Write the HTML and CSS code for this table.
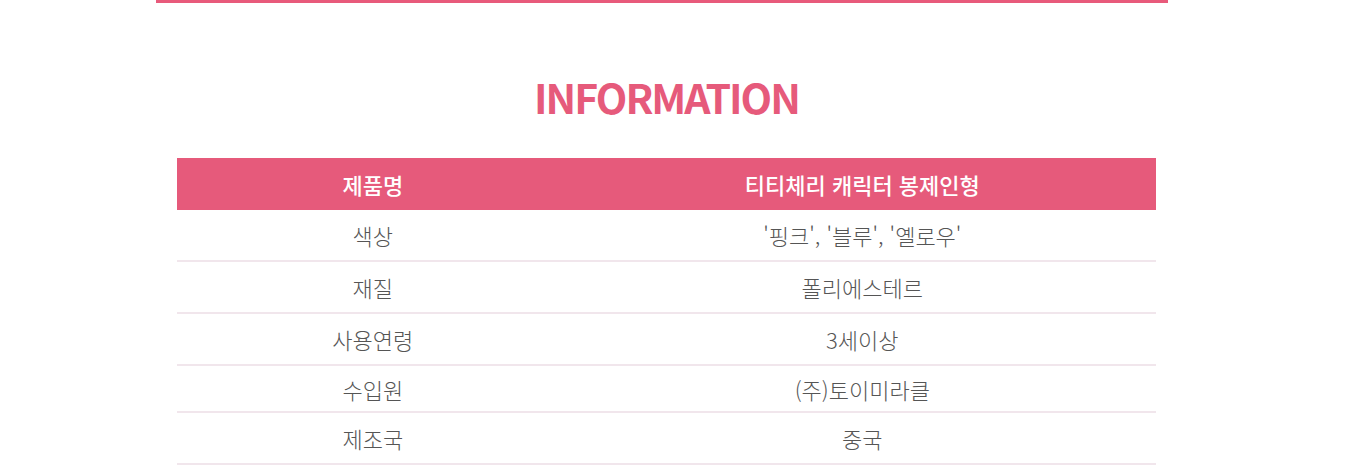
FILE: index.html
```html
<!DOCTYPE html>
<html lang="ko">
<head>
    <meta charset="UTF-8">
    <meta name="viewport" content="width=device-width, initial-scale=1.0">
    <title>Information</title>
    <link rel="stylesheet" href="styles.css">
</head>
<body>
<div class="page">
    <div class="top-bar"></div>

    <!-- Product information -->
    <section class="info">
        <h2 class="info-title">INFORMATION</h2>
        <table class="info-table">
            <thead>
                <tr>
                    <th class="col-label">제품명</th>
                    <th class="col-value">티티체리 캐릭터 봉제인형</th>
                </tr>
            </thead>
            <tbody>
                <tr>
                    <td>색상</td>
                    <td>'핑크', '블루', '옐로우'</td>
                </tr>
                <tr>
                    <td>재질</td>
                    <td>폴리에스테르</td>
                </tr>
                <tr>
                    <td>사용연령</td>
                    <td>3세이상</td>
                </tr>
                <tr class="short">
                    <td>수입원</td>
                    <td>(주)토이미라클</td>
                </tr>
                <tr>
                    <td>제조국</td>
                    <td>중국</td>
                </tr>
            </tbody>
        </table>
    </section>
</div>
</body>
</html>
```

FILE: styles.css
```css
/* General Styles */
body {
    margin: 0;
    padding: 0;
    background: #fff;
    font-family: "Noto Sans CJK KR", "Noto Sans", sans-serif;
    color: #555;
}
.page {
    width: 1012px;
    margin-left: 156px;
}
.top-bar {
    height: 3px;
    background: #e85a7b;
}
.info {
    padding: 0 12px 0 21px;
}
.info-title {
    margin: 0;
    padding-top: 63px;
    text-align: center;
    font-size: 41px;
    font-weight: 700;
    line-height: 60px;
    letter-spacing: -2px;
    color: #e65a7b;
}
.info-table {
    width: 979px;
    border-collapse: collapse;
    margin-top: 32px;
}
.info-table th {
    height: 52px;
    padding: 0;
    background: #e65a7b;
    color: #fff;
    font-size: 22px;
    font-weight: 500;
    text-align: center;
}
.col-label {
    width: 40%;
}
.info-table td {
    height: 50px;
    padding: 0;
    font-size: 22px;
    font-weight: 300;
    text-align: center;
    border-bottom: 2px solid #f1e6ec;
}
.info-table tr.short td {
    height: 45px;
}
```
